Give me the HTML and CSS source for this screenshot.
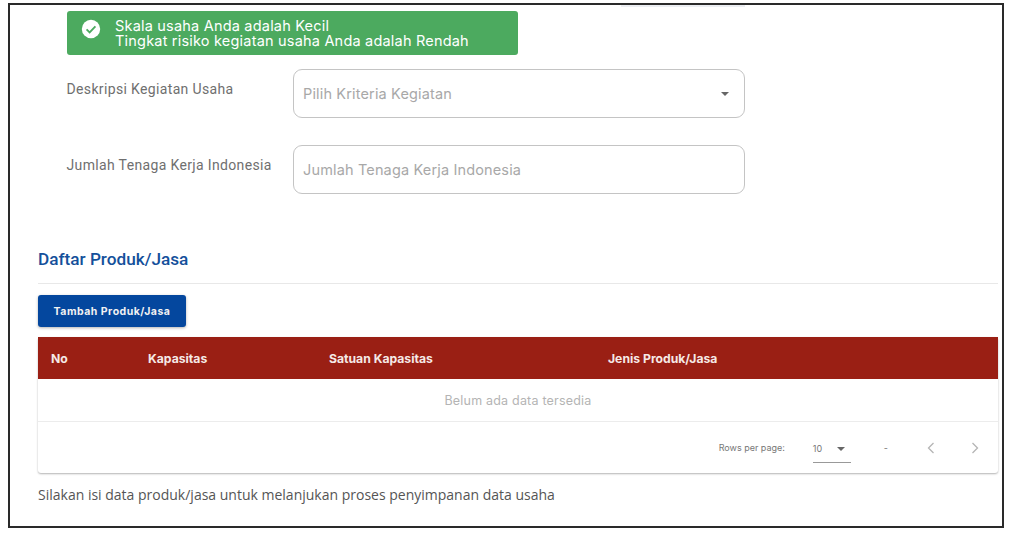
FILE: index.html
```html
<!DOCTYPE html>
<html lang="en">

<head>
    <meta charset="UTF-8">
    <meta name="viewport" content="width=device-width, initial-scale=1.0">
    <title>Daftar Produk/Jasa</title>
    <link rel="stylesheet" href="styles.css">
</head>

<body>
    <main class="frame">
        <div class="sliver"></div>

        <div class="alert">
            <svg class="alert-icon" viewBox="0 0 24 24" width="22" height="22">
                <circle cx="12" cy="12" r="10" fill="#fff"></circle>
                <path d="M7.2 12.4l3.3 3.3 6.3-6.5" fill="none" stroke="#4caa5f" stroke-width="2"></path>
            </svg>
            <p>Skala usaha Anda adalah Kecil<br>Tingkat risiko kegiatan usaha Anda adalah Rendah</p>
        </div>

        <div class="field field-select">
            <label class="field-label">Deskripsi Kegiatan Usaha</label>
            <div class="input">
                <span>Pilih Kriteria Kegiatan</span>
                <span class="caret"></span>
            </div>
        </div>

        <div class="field field-text">
            <label class="field-label">Jumlah Tenaga Kerja Indonesia</label>
            <div class="input">
                <span>Jumlah Tenaga Kerja Indonesia</span>
            </div>
        </div>

        <section class="products">
            <h2>Daftar Produk/Jasa</h2>
            <hr>
            <button class="add-btn" type="button">Tambah Produk/Jasa</button>

            <div class="table-card">
                <div class="table-head">
                    <span class="col-no">No</span>
                    <span class="col-cap">Kapasitas</span>
                    <span class="col-unit">Satuan Kapasitas</span>
                    <span>Jenis Produk/Jasa</span>
                </div>
                <div class="table-empty">Belum ada data tersedia</div>
                <div class="table-foot">
                    <span class="rows-label">Rows per page:</span>
                    <div class="rows-select">
                        <span>10</span>
                        <span class="caret caret-small"></span>
                    </div>
                    <span class="range">-</span>
                    <svg class="pager" viewBox="0 0 10 14" width="10" height="14">
                        <path d="M7.5 2L2.5 7l5 5" fill="none" stroke="#b5b5b5" stroke-width="1.3"></path>
                    </svg>
                    <svg class="pager pager-next" viewBox="0 0 10 14" width="10" height="14">
                        <path d="M2.5 2l5 5-5 5" fill="none" stroke="#b5b5b5" stroke-width="1.3"></path>
                    </svg>
                </div>
            </div>

            <p class="note">Silakan isi data produk/jasa untuk melanjukan proses penyimpanan data usaha</p>
        </section>
    </main>
</body>

</html>
```

FILE: styles.css
```css
html,
body {
    height: 100%;
}

body {
    margin: 0;
    padding: 3px 11px 9px 8px;
    box-sizing: border-box;
    background-color: #fff;
    font-family: Inter, sans-serif;
}

.frame {
    box-sizing: border-box;
    height: 525px;
    border: 2px solid #2a2a2a;
    padding: 0 3px 0 28px;
    overflow: hidden;
}

.sliver {
    width: 124px;
    height: 2px;
    margin-left: 583px;
    margin-bottom: 4px;
    background-color: #eceef2;
}

.alert {
    display: flex;
    align-items: center;
    box-sizing: border-box;
    width: 451px;
    height: 44px;
    margin-left: 29px;
    padding-left: 13px;
    background-color: #4caa5f;
    border-radius: 3px;
    color: #fff;
}

.alert-icon {
    align-self: flex-start;
    margin-top: 7px;
}

.alert p {
    margin: 0 0 0 13px;
    font-size: 14.5px;
    line-height: 15px;
    letter-spacing: 0.2px;
}

.field {
    display: flex;
    margin-left: 29px;
}

.field-select {
    margin-top: 14px;
}

.field-text {
    margin-top: 27px;
}

.field-label {
    width: 226px;
    padding-top: 12px;
    margin-left: -0.5px;
    margin-right: 0.5px;
    font-family: Roboto, sans-serif;
    font-size: 14px;
    font-weight: 400;
    letter-spacing: 0.35px;
    color: #6f6f6f;
}

.input {
    display: flex;
    align-items: center;
    justify-content: space-between;
    box-sizing: border-box;
    width: 452px;
    height: 49px;
    padding: 0 15px 0 9px;
    border: 1px solid #c4c4c4;
    border-radius: 9px;
    font-size: 14.5px;
    letter-spacing: 0.15px;
    color: #a8a8a8;
}

.caret {
    width: 0;
    height: 0;
    border-left: 4px solid transparent;
    border-right: 4px solid transparent;
    border-top: 4px solid #666;
}

.products {
    margin-top: 53px;
    margin-right: 1px;
}

.products h2 {
    margin: 0;
    font-family: Roboto, sans-serif;
    font-size: 17.2px;
    font-weight: 500;
    line-height: 24px;
    color: #14509b;
}

.products hr {
    margin: 12px 0 11px;
    border: 0;
    border-top: 1px solid #e8e8e8;
}

.add-btn {
    display: block;
    width: 148px;
    height: 32px;
    padding: 0;
    border: 0;
    border-radius: 3px;
    background-color: #04479e;
    box-shadow: 0 1px 3px rgba(0, 0, 0, 0.3);
    color: #f2f2f2;
    font-family: Inter, sans-serif;
    font-size: 10.5px;
    font-weight: 700;
    letter-spacing: 0.5px;
}

.table-card {
    margin-top: 10px;
    border-radius: 3px;
    box-shadow: 0 1px 2px rgba(0, 0, 0, 0.3);
}

.table-head {
    display: flex;
    align-items: center;
    height: 42px;
    padding-left: 13px;
    background-color: #9a1f14;
    color: #f5e9e6;
    font-size: 12.2px;
    font-weight: 700;
}

.col-no {
    width: 97px;
}

.col-cap {
    width: 181px;
}

.col-unit {
    width: 279px;
}

.table-empty {
    height: 42px;
    border-bottom: 1px solid #ececec;
    line-height: 44px;
    text-align: center;
    font-size: 12.5px;
    letter-spacing: 0.2px;
    color: #b4b4b4;
}

.table-foot {
    display: flex;
    align-items: center;
    justify-content: flex-end;
    height: 51px;
    padding-right: 18px;
    color: #777;
    font-size: 9px;
}

.rows-label {
    margin-right: 28px;
}

.rows-select {
    display: flex;
    align-items: center;
    justify-content: space-between;
    box-sizing: border-box;
    width: 38px;
    height: 28px;
    padding: 0 6px 0 0;
    border-bottom: 1px solid #999;
    margin-top: 3px;
}

.caret-small {
    border-top-color: #666;
}

.range {
    margin-left: 33px;
}

.pager {
    margin-left: 38px;
}

.pager-next {
    margin-left: 34px;
}

.note {
    margin: 12px 0 0;
    font-family: "Open Sans", sans-serif;
    font-size: 14px;
    color: #555;
}
```
